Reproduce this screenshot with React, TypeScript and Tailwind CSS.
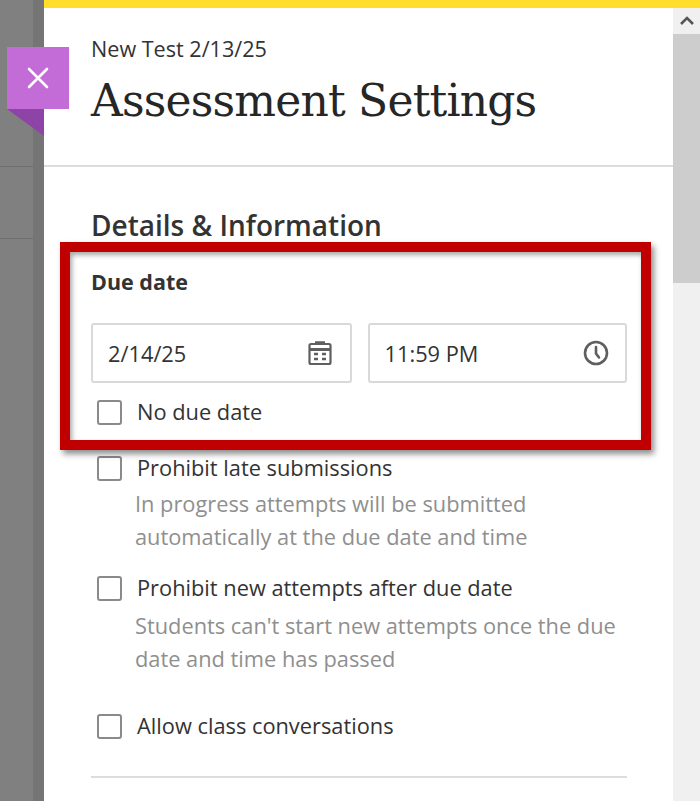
const sans = "font-['Open_Sans',sans-serif]";

function CheckRow({ label, help, helpClass = "mt-[2px]" }: { label: string; help?: string[]; helpClass?: string }) {
  return (
    <div>
      <div className="flex items-center h-[34px]">
        <span className="w-[25px] h-[25px] ml-[6px] mr-[15px] rounded-[3px] border-2 border-[#8a8a8a] bg-white shrink-0" />
        <span className="text-[21.8px] text-[#333333]">{label}</span>
      </div>
      {help && (
        <div className={`ml-[44px] ${helpClass} text-[21.8px] leading-[33px] text-[#8f8f8f]`}>
          {help.map((line) => (
            <div key={line}>{line}</div>
          ))}
        </div>
      )}
    </div>
  );
}

function CalendarIcon() {
  return (
    <svg width="26" height="26" viewBox="0 0 26 26" fill="none" stroke="#5f5f5f" strokeWidth="2.2">
      <rect x="2.5" y="4" width="21" height="20" rx="1.5" />
      <path d="M2.5 9.5h21" strokeWidth="3" />
      <path d="M8 2.5h10" strokeWidth="2.5" />
      <path d="M7 14h4M15 14h4M7 19h4M15 19h4" strokeWidth="2.6" />
    </svg>
  );
}

function ClockIcon() {
  return (
    <svg width="26" height="26" viewBox="0 0 26 26" fill="none" stroke="#5f5f5f" strokeWidth="2.6" strokeLinecap="round">
      <circle cx="13" cy="13" r="11" />
      <path d="M13 7v6.5l3 4" />
    </svg>
  );
}

export default function App() {
  return (
    <div className={`relative flex w-[700px] h-[801px] overflow-hidden bg-white ${sans}`}>
      {/* page behind the panel */}
      <div className="w-[44px] shrink-0 flex flex-col bg-[#808080] border-r-[11px] border-[#757575]">
        <div className="h-[166px]" />
        <div className="h-[73px] border-t border-b border-[#6e6e6e]" />
      </div>

      <div className="flex-1 min-w-0 flex flex-col">
        <div className="h-[8px] bg-[#ffdf2b]" />
        <div className="flex flex-1 min-h-0">
          <main className="flex-1 min-w-0">
            <header className="h-[159px] px-[47px] pt-[26px] border-b-2 border-[#dcdcdc]">
              <div className="text-[21.6px] leading-[29px] text-[#333333]">New Test 2/13/25</div>
              <h1 className="mt-[10px] text-[44px] leading-[56px] text-[#262626] font-['DejaVu_Serif',serif] tracking-[-0.8px] whitespace-nowrap">
                Assessment Settings
              </h1>
            </header>

            <section className="px-[47px] pt-[39px]">
              <h2 className="text-[28px] leading-[38px] font-semibold text-[#333333]">Details &amp; Information</h2>
              <div className="mt-[24px] text-[21.5px] leading-[28px] font-bold text-[#333333]">Due date</div>

              <div className="mt-[27px] flex gap-[16px] w-[536px]">
                <div className="flex-1 h-[60px] flex items-center justify-between pl-[15px] pr-[17px] border-2 border-[#d9d9d9] rounded-[3px]">
                  <span className="pt-[2px] text-[21.8px] text-[#333333]">2/14/25</span>
                  <CalendarIcon />
                </div>
                <div className="flex-1 h-[60px] flex items-center justify-between pl-[15px] pr-[16px] border-2 border-[#d9d9d9] rounded-[3px]">
                  <span className="pt-[2px] text-[21.8px] text-[#333333]">11:59 PM</span>
                  <ClockIcon />
                </div>
              </div>

              <div className="mt-[12px] flex flex-col">
                <CheckRow label="No due date" />
                <div className="mt-[22px]">
                  <CheckRow
                    label="Prohibit late submissions"
                    help={["In progress attempts will be submitted", "automatically at the due date and time"]}
                  />
                </div>
                <div className="mt-[18px]">
                  <CheckRow
                    label="Prohibit new attempts after due date"
                    helpClass="mt-[4px]"
                    help={["Students can't start new attempts once the due", "date and time has passed"]}
                  />
                </div>
                <div className="mt-[34px]">
                  <CheckRow label="Allow class conversations" />
                </div>
              </div>

              <div className="mt-[33px] w-[536px] border-t-2 border-[#dcdcdc]" />
            </section>
          </main>

          {/* scrollbar */}
          <div className="w-[27px] shrink-0 flex flex-col bg-[#f0f0f0]">
            <div className="h-[26px] flex items-center justify-center">
              <svg width="16" height="10" viewBox="0 0 16 10" fill="none" stroke="#555555" strokeWidth="2.5">
                <path d="M2 8l6-6 6 6" />
              </svg>
            </div>
            <div className="h-[249px] bg-[#cdcdcd]" />
          </div>
        </div>
      </div>

      {/* close tab */}
      <button className="absolute left-[7px] top-[47px] w-[62px] h-[62px] flex items-center justify-center bg-[#c36bd6]">
        <svg width="24" height="24" viewBox="0 0 24 24" fill="none" stroke="#ffffff" strokeWidth="2.6" strokeLinecap="round">
          <path d="M3 3l18 18M21 3L3 21" />
        </svg>
      </button>
      <svg className="absolute left-[7px] top-[109px]" width="37" height="27" viewBox="0 0 37 27">
        <path d="M0 0h37v27z" fill="#8e44a6" />
      </svg>

      {/* annotation */}
      <div className="absolute left-[60px] top-[242px] w-[591px] h-[208px] border-[10px] border-[#c00000] shadow-[3px_4px_6px_rgba(0,0,0,0.45),inset_2px_3px_5px_rgba(0,0,0,0.35)]" />
    </div>
  );
}
